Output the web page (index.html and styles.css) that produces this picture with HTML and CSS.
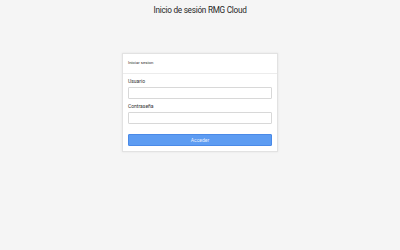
FILE: index.html
```html
<!DOCTYPE html>
<html lang="es">
<head>
<meta charset="utf-8">
<title>Inicio de sesión RMG Cloud</title>
<link rel="stylesheet" href="styles.css">
</head>
<body>
<h1 class="title">Inicio de sesión RMG Cloud</h1>
<div class="card">
  <div class="card-header">Iniciar sesion</div>
  <form class="card-body">
    <label class="label">Usuario</label>
    <input class="input" type="text">
    <label class="label">Contraseña</label>
    <input class="input" type="password">
    <button class="btn" type="button">Acceder</button>
  </form>
</div>
</body>
</html>
```
FILE: styles.css
```css
html, body {
  margin: 0;
  padding: 0;
  background: #f5f5f5;
  font-family: Roboto, "Liberation Sans", sans-serif;
  color: #333;
}
body {
  display: flex;
  flex-direction: column;
  align-items: center;
  width: 400px;
  height: 250px;
}
.title {
  margin: 4px 0 0;
  font-size: 8.2px;
  letter-spacing: -0.25px;
  font-weight: 400;
  line-height: 12px;
  color: #262626;
}
.card {
  margin-top: 37px;
  width: 156px;
  background: #fff;
  border: 1px solid #e2e2e2;
  box-sizing: border-box;
  box-shadow: 0 0 2px rgba(0,0,0,0.08);
}
.card-header {
  height: 20px;
  box-sizing: border-box;
  display: flex;
  align-items: center;
  padding: 0 5px 3px;
  font-size: 4.3px;
  color: #333;
  border-bottom: 1px solid #ececec;
}
.card-body {
  display: flex;
  flex-direction: column;
  padding: 4px 5px 5px;
  margin: 0;
}
.label {
  font-size: 5px;
  line-height: 7px;
  margin: 0 0 2px;
  color: #333;
}
.input {
  height: 12px;
  box-sizing: border-box;
  border: 1px solid #d8d8d8;
  border-radius: 1px;
  margin: 0 0 4px;
  padding: 0;
  background: #fff;
}
.btn {
  margin-top: 6px;
  height: 12px;
  border: 1px solid #4a8ae8;
  border-radius: 1px;
  background: #5d9cf2;
  color: #e8f0fd;
  font-family: Roboto, "Liberation Sans", sans-serif;
  font-size: 5px;
  padding: 0;
}
```
